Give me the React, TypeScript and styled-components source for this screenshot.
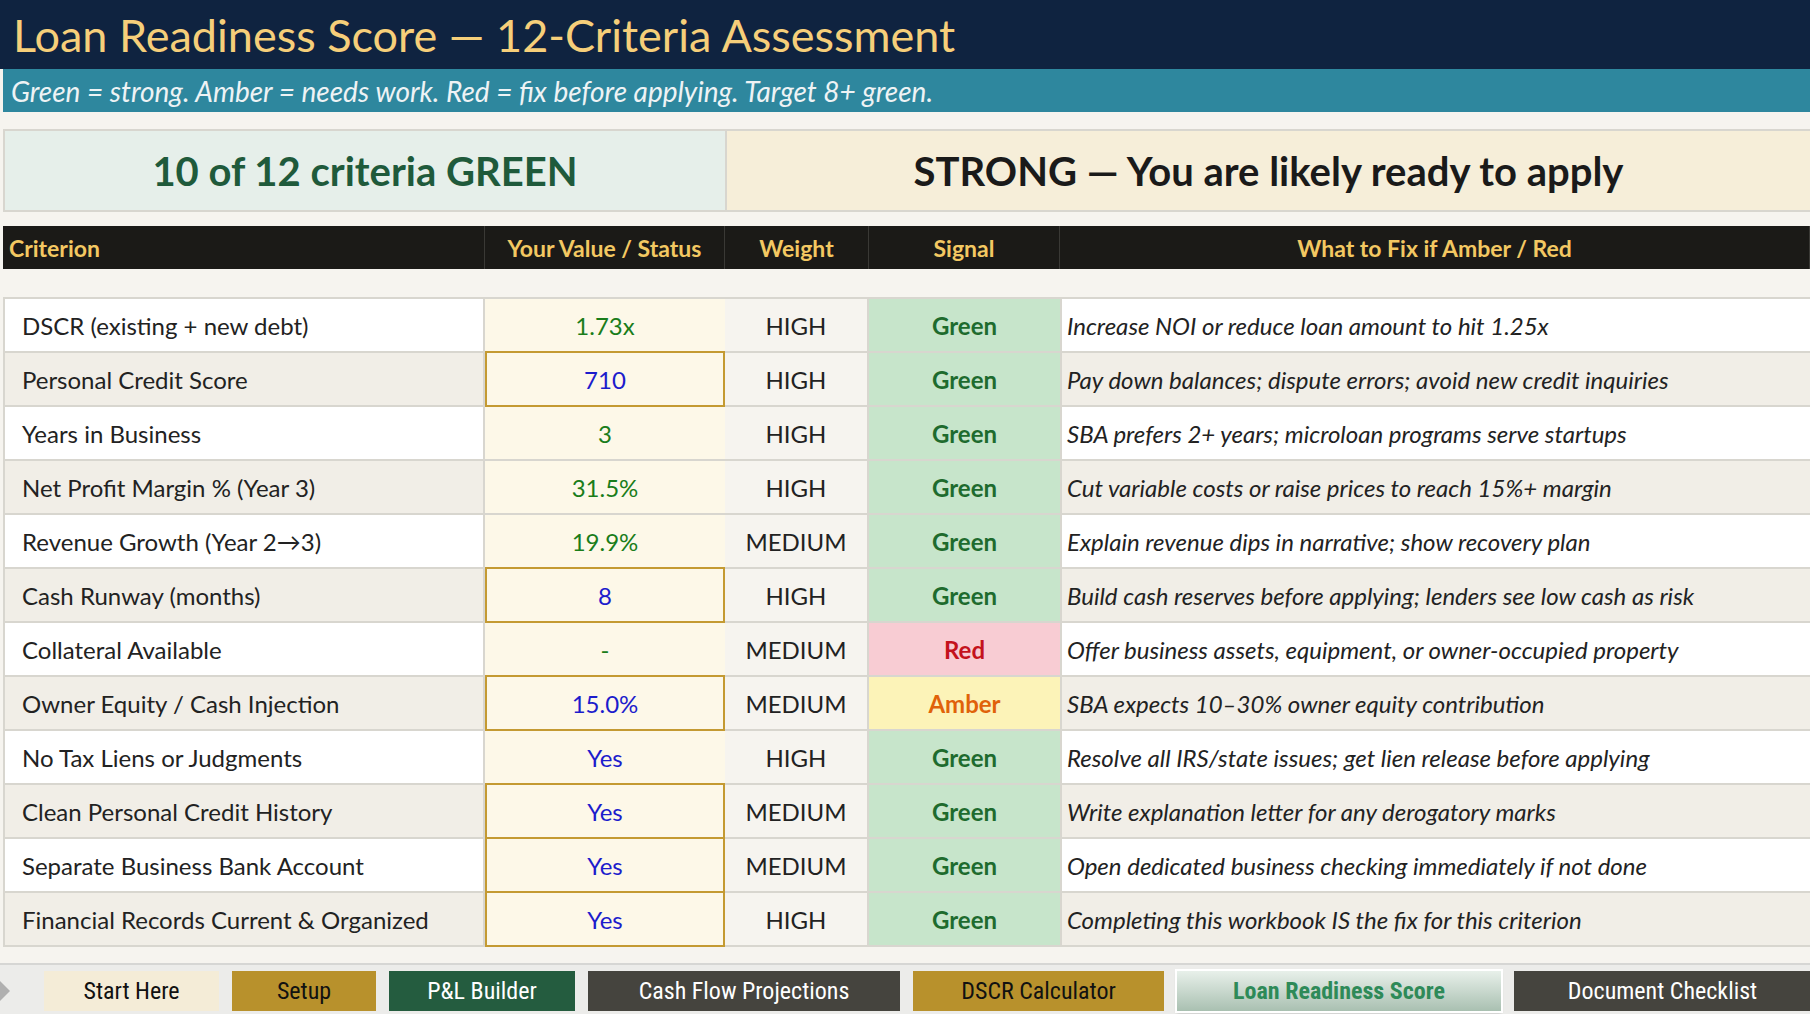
import React from "react";
import styled, { createGlobalStyle } from "styled-components";

const Global = createGlobalStyle`
  html, body { margin: 0; padding: 0; background: #f6f4ef; }
  body { width: 1810px; height: 1014px; overflow: hidden; font-family: "Lato", "Open Sans", sans-serif; }
`;

const Page = styled.div`
  width: 1810px; height: 1014px; display: flex; flex-direction: column; background: #f6f4ef;
`;
const Title = styled.div`
  height: 69px; background: #0f2340; color: #f6cf7a; font-size: 45px; padding-left: 10px;
  display: flex; align-items: center; font-weight: 400; border-left: 3px solid #0f2340;
`;
const Sub = styled.div`
  height: 43px; background: #2e879e; color: #eef3f5; font-size: 28px; font-style: italic;
  padding-left: 8px; display: flex; align-items: center; margin-left: 3px;
`;
const ScoreRow = styled.div`
  margin: 17px 0 0 3px; height: 83px; display: grid; grid-template-columns: 722px 1fr;
`;
const ScoreCell = styled.div<{ $bg: string; $fg: string }>`
  background: ${p => p.$bg}; color: ${p => p.$fg}; font-weight: 700; font-size: 40px;
  display: flex; align-items: center; justify-content: center; border: 2px solid #d8d6cf; border-right: none;
`;
const cols = "482px 240px 144px 191px 1fr";
const Header = styled.div`
  margin: 14px 0 0 3px; height: 43px; display: grid; grid-template-columns: ${cols};
  background: #1b1a17; color: #f3c862; font-weight: 700; font-size: 23px;
`;
const HCell = styled.div<{ $left?: boolean }>`
  display: flex; align-items: center; justify-content: ${p => (p.$left ? "flex-start" : "center")};
  padding-left: ${p => (p.$left ? "6px" : "0")}; border-right: 1px solid #3a3935;
`;
const Body = styled.div`
  margin: 28px 0 0 3px; display: flex; flex-direction: column; border-top: 2px solid #d8d6cf;
`;
const Row = styled.div<{ $alt: boolean }>`
  height: 54px; display: grid; grid-template-columns: ${cols}; background: ${p => (p.$alt ? "#f1eee7" : "#ffffff")};
  border-bottom: 2px solid #d8d6cf; box-sizing: border-box; font-size: 24px; color: #222;
`;
const Crit = styled.div`
  display: flex; align-items: center; padding-left: 17px; border-left: 2px solid #d8d6cf; border-right: 2px solid #d8d6cf;
`;
const Val = styled.div<{ $c: string; $bord: boolean }>`
  display: flex; align-items: center; justify-content: center; background: #fdf8e8; color: ${p => p.$c};
  box-shadow: ${p => (p.$bord ? "inset 0 0 0 2px #c49a32" : "none")}; margin: ${p => (p.$bord ? "-2px 0 -2px 0" : "0")};
`;
const Weight = styled.div`
  display: flex; align-items: center; justify-content: center; background: #f6f4ef; border-right: 2px solid #d8d6cf;
`;
const Signal = styled.div<{ $bg: string; $fg: string }>`
  display: flex; align-items: center; justify-content: center; background: ${p => p.$bg}; color: ${p => p.$fg}; font-weight: 700;
`;
const Fix = styled.div`
  display: flex; align-items: center; padding-left: 5px; font-style: italic; border-left: 2px solid #d8d6cf; white-space: nowrap; overflow: hidden;
`;
const Tabs = styled.div`
  margin-top: 16px; flex: 1; background: #ececea; border-top: 2px solid #d6d6d4; display: flex; align-items: flex-start; padding-top: 6px;
`;
const Arrow = styled.div`
  width: 0; height: 0; border-top: 10px solid transparent; border-bottom: 10px solid transparent; border-left: 10px solid #b0b0b0;
  margin: 10px 34px 0 0;
`;
const Tab = styled.div<{ $w: number; $bg: string; $fg: string; $active?: boolean }>`
  width: ${p => p.$w}px; height: 40px; margin-right: 13px; background: ${p => p.$bg}; color: ${p => p.$fg};
  font-family: "Liberation Sans Narrow", "Roboto Condensed", "Liberation Sans", sans-serif; font-size: 24px;
  display: flex; align-items: center; justify-content: center; flex-shrink: 0;
  ${p => (p.$active ? "box-shadow: 0 0 0 2px #ffffff, 0 2px 3px rgba(0,0,0,.25); font-weight: 700;" : "")}
`;

type R = [string, string, "g" | "b", boolean, string, "Green" | "Red" | "Amber", string];
const rows: R[] = [
  ["DSCR (existing + new debt)", "1.73x", "g", false, "HIGH", "Green", "Increase NOI or reduce loan amount to hit 1.25x"],
  ["Personal Credit Score", "710", "b", true, "HIGH", "Green", "Pay down balances; dispute errors; avoid new credit inquiries"],
  ["Years in Business", "3", "g", false, "HIGH", "Green", "SBA prefers 2+ years; microloan programs serve startups"],
  ["Net Profit Margin % (Year 3)", "31.5%", "g", false, "HIGH", "Green", "Cut variable costs or raise prices to reach 15%+ margin"],
  ["Revenue Growth (Year 2\u21923)", "19.9%", "g", false, "MEDIUM", "Green", "Explain revenue dips in narrative; show recovery plan"],
  ["Cash Runway (months)", "8", "b", true, "HIGH", "Green", "Build cash reserves before applying; lenders see low cash as risk"],
  ["Collateral Available", "-", "g", false, "MEDIUM", "Red", "Offer business assets, equipment, or owner-occupied property"],
  ["Owner Equity / Cash Injection", "15.0%", "b", true, "MEDIUM", "Amber", "SBA expects 10\u201330% owner equity contribution"],
  ["No Tax Liens or Judgments", "Yes", "b", false, "HIGH", "Green", "Resolve all IRS/state issues; get lien release before applying"],
  ["Clean Personal Credit History", "Yes", "b", true, "MEDIUM", "Green", "Write explanation letter for any derogatory marks"],
  ["Separate Business Bank Account", "Yes", "b", true, "MEDIUM", "Green", "Open dedicated business checking immediately if not done"],
  ["Financial Records Current & Organized", "Yes", "b", true, "HIGH", "Green", "Completing this workbook IS the fix for this criterion"],
];
const sig = {
  Green: ["#c7e5cb", "#1e6b2e"],
  Red: ["#f8ccd3", "#c4121c"],
  Amber: ["#fcf3b8", "#e0620a"],
};

export default function App() {
  return (
    <Page>
      <Global />
      <Title>Loan Readiness Score — 12-Criteria Assessment</Title>
      <Sub>Green = strong. Amber = needs work. Red = fix before applying. Target 8+ green.</Sub>
      <ScoreRow>
        <ScoreCell $bg="#e6efea" $fg="#1f5a3b">10 of 12 criteria GREEN</ScoreCell>
        <ScoreCell $bg="#f6eed9" $fg="#1a1a1a">STRONG — You are likely ready to apply</ScoreCell>
      </ScoreRow>
      <Header>
        <HCell $left>Criterion</HCell>
        <HCell>Your Value / Status</HCell>
        <HCell>Weight</HCell>
        <HCell>Signal</HCell>
        <HCell>What to Fix if Amber / Red</HCell>
      </Header>
      <Body>
        {rows.map((r, i) => (
          <Row key={i} $alt={i % 2 === 1}>
            <Crit>{r[0]}</Crit>
            <Val $c={r[2] === "g" ? "#1a7d1a" : "#1c1ccc"} $bord={r[3]}>{r[1]}</Val>
            <Weight>{r[4]}</Weight>
            <Signal $bg={sig[r[5]][0]} $fg={sig[r[5]][1]}>{r[5]}</Signal>
            <Fix>{r[6]}</Fix>
          </Row>
        ))}
      </Body>
      <Tabs>
        <Arrow />
        <Tab $w={175} $bg="#f4ecd7" $fg="#111">Start Here</Tab>
        <Tab $w={144} $bg="#b8912c" $fg="#111">Setup</Tab>
        <Tab $w={186} $bg="#245c3f" $fg="#fff">P&amp;L Builder</Tab>
        <Tab $w={312} $bg="#45443e" $fg="#fff">Cash Flow Projections</Tab>
        <Tab $w={251} $bg="#b8912c" $fg="#111">DSCR Calculator</Tab>
        <Tab $w={324} $bg="linear-gradient(#e8f0ea, #a9c0b1)" $fg="#2e8a58" $active>Loan Readiness Score</Tab>
        <Tab $w={297} $bg="#45443e" $fg="#fff">Document Checklist</Tab>
      </Tabs>
    </Page>
  );
}
